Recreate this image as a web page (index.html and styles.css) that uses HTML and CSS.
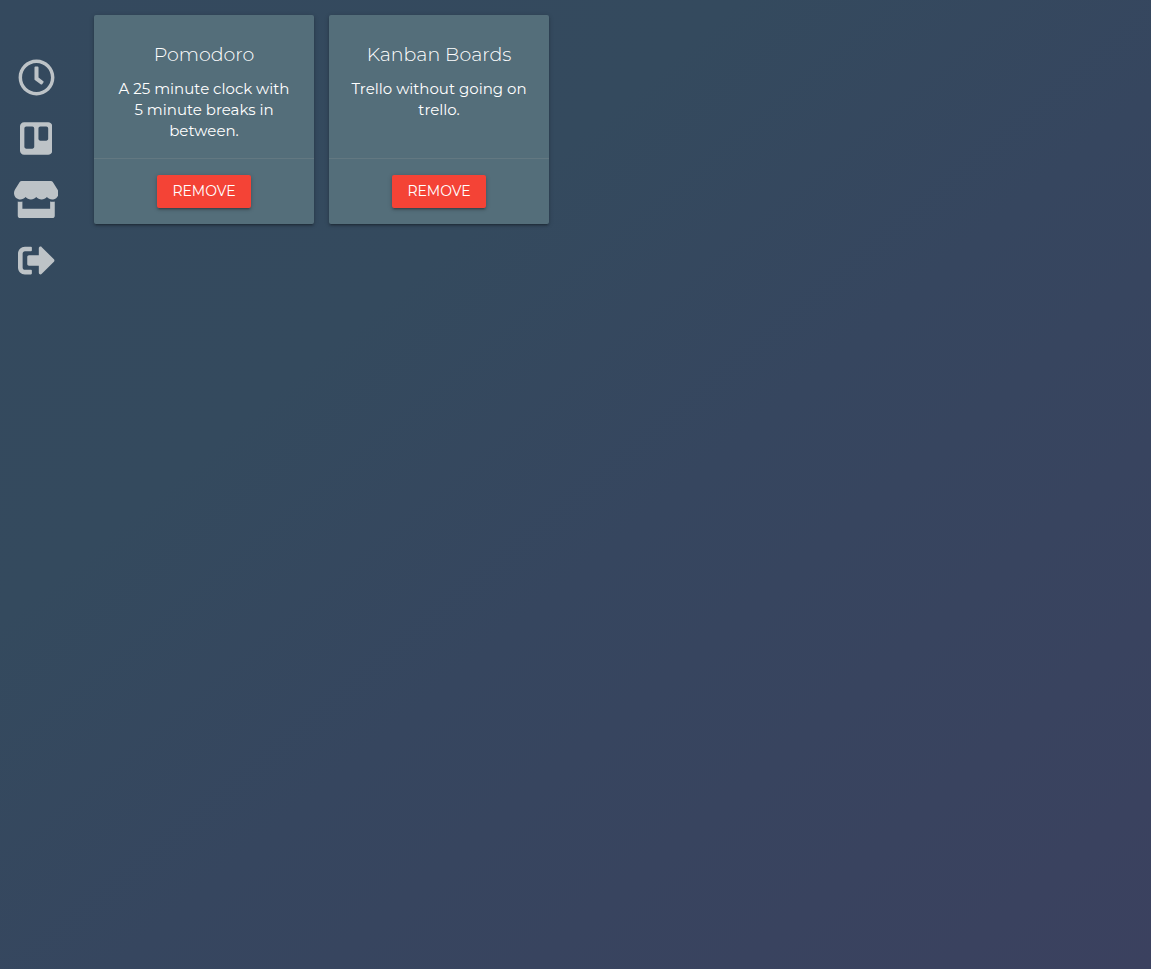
FILE: index.html
```html
<!DOCTYPE html>
<html lang="en">
<head>
  <meta charset="utf-8">
  <meta name="viewport" content="width=device-width, initial-scale=1">
  <title>Store</title>
  <link rel="stylesheet" href="styles.css">
</head>
<body>
  <div class="layout">
    <nav class="sidebar" aria-label="Main">
      <a class="nav-link" href="#pomodoro" aria-label="Pomodoro">
        <svg class="icon" viewBox="0 0 512 512" aria-hidden="true"><path d="M256 8C119 8 8 119 8 256s111 248 248 248 248-111 248-248S393 8 256 8zm0 448c-110.500 0-200-89.500-200-200S145.500 56 256 56s200 89.500 200 200-89.500 200-200 200zm61.800-104.400l-84.900-61.700c-3.100-2.300-4.900-5.900-4.900-9.700V116c0-6.600 5.400-12 12-12h32c6.600 0 12 5.400 12 12v141.700l66.800 48.600c5.400 3.900 6.500 11.400 2.600 16.800L334.600 349c-3.900 5.300-11.400 6.500-16.800 2.600z"/></svg>
      </a>
      <a class="nav-link" href="#boards" aria-label="Kanban boards">
        <svg class="icon" viewBox="0 0 448 512" aria-hidden="true"><path d="M392.300 32H56.100C25.100 32 0 57.100 0 88v336c0 30.900 25.100 56 56 56h336.200c30.800-.2 55.700-25.200 55.700-56V88c.1-30.800-24.800-55.800-55.600-56zM197 371.300c-.2 14.700-12.100 26.600-26.900 26.600H87.400c-14.800.1-26.900-11.800-27-26.600V117.100c0-14.800 12-26.900 26.900-26.900h82.900c14.800 0 26.900 12 26.900 26.900v254.200zm193.100-112c0 14.800-12 26.900-26.900 26.900h-81c-14.800 0-26.900-12-26.900-26.900v-142c0-14.800 12-26.900 26.800-26.900h81.200c14.800 0 26.900 12 26.900 26.900l-.1 142z"/></svg>
      </a>
      <a class="nav-link" href="#store" aria-label="Store">
        <svg class="icon" viewBox="0 0 616 512" aria-hidden="true"><path d="M602 118.600L537.100 15C531.300 5.700 521 0 510 0H106C95 0 84.700 5.700 78.900 15L14 118.600c-33.500 53.500-3.800 127.900 58.800 136.400 4.500.6 9.100.9 13.700.9 29.600 0 55.800-13 73.800-33.100 18 20.100 44.300 33.100 73.800 33.100 29.600 0 55.800-13 73.800-33.100 18 20.100 44.300 33.100 73.800 33.100 29.600 0 55.800-13 73.800-33.100 18.100 20.100 44.300 33.100 73.800 33.100 4.700 0 9.200-.3 13.700-.9 62.800-8.400 92.600-82.800 59-136.400zM529.500 288c-10 0-19.900-1.500-29.500-3.800V384H116v-99.800c-9.600 2.200-19.500 3.800-29.500 3.800-6 0-12.100-.4-18-1.200-5.600-.8-11.100-2.100-16.400-3.600V480c0 17.700 14.300 32 32 32h448c17.700 0 32-14.300 32-32V283.200c-5.400 1.600-10.800 2.900-16.400 3.600-6.100.8-12.100 1.200-18.200 1.200z"/></svg>
      </a>
      <a class="nav-link" href="#logout" aria-label="Log out">
        <svg class="icon" viewBox="0 0 512 512" aria-hidden="true"><path d="M497 273L329 441c-15 15-41 4.500-41-17v-96H152c-13.300 0-24-10.700-24-24v-96c0-13.300 10.700-24 24-24h136V88c0-21.400 25.900-32 41-17l168 168c9.300 9.400 9.300 24.600 0 34zM192 436v-40c0-6.600-5.400-12-12-12H96c-17.700 0-32-14.300-32-32V160c0-17.700 14.300-32 32-32h84c6.600 0 12-5.400 12-12V76c0-6.600-5.400-12-12-12H96c-53 0-96 43-96 96v192c0 53 43 96 96 96h84c6.600 0 12-5.400 12-12z"/></svg>
      </a>
    </nav>

    <main class="cards">
      <article class="card">
        <div class="card-content">
          <h2 class="card-title">Pomodoro</h2>
          <p class="card-text">A 25 minute clock with 5 minute breaks in between.</p>
        </div>
        <div class="card-action">
          <button class="button" type="button">REMOVE</button>
        </div>
      </article>
      <article class="card">
        <div class="card-content">
          <h2 class="card-title">Kanban Boards</h2>
          <p class="card-text">Trello without going on trello.</p>
        </div>
        <div class="card-action">
          <button class="button" type="button">REMOVE</button>
        </div>
      </article>
    </main>
  </div>
</body>
</html>
```

FILE: styles.css
```css
* {
  box-sizing: border-box;
}

body {
  margin: 0;
  min-height: 100vh;
  background: linear-gradient(to bottom right, #34495e 0%, #344a5e 32%, #36465f 55%, #3b415f 100%);
  color: #fff;
  font-family: Montserrat, Inter, "Open Sans", sans-serif;
  font-size: 15px;
}

.layout {
  display: flex;
  align-items: flex-start;
}

.sidebar {
  display: flex;
  flex: none;
  flex-direction: column;
  align-items: center;
  gap: 24px;
  width: 72px;
  padding-top: 59px;
}

.nav-link {
  display: flex;
  color: #bdc3c7;
}

.icon {
  height: 37px;
  fill: currentColor;
}

.cards {
  display: flex;
  flex: 1;
  flex-wrap: wrap;
  gap: 15px;
  padding: 15px 22px;
}

.card {
  display: flex;
  flex-direction: column;
  width: 220px;
  border-radius: 2px;
  background: #546e7a;
  box-shadow: 0 2px 2px rgba(0, 0, 0, 0.14), 0 3px 1px -2px rgba(0, 0, 0, 0.12), 0 1px 5px rgba(0, 0, 0, 0.2);
  text-align: center;
}

.card-content {
  flex: 1;
  padding: 24px 20px 17px;
}

.card-title {
  margin: 0 0 7px;
  font-size: 19px;
  font-weight: 300;
  line-height: 32px;
}

.card-text {
  margin: 0;
  line-height: 21px;
}

.card-action {
  display: flex;
  justify-content: center;
  padding: 16px 24px;
  border-top: 1px solid rgba(160, 160, 160, 0.2);
}

.button {
  padding: 0 15px;
  border: 0;
  border-radius: 2px;
  background: #f44336;
  box-shadow: 0 2px 2px rgba(0, 0, 0, 0.14), 0 3px 1px -2px rgba(0, 0, 0, 0.12), 0 1px 5px rgba(0, 0, 0, 0.2);
  color: #fff;
  font: inherit;
  font-size: 14px;
  line-height: 33px;
  cursor: pointer;
}
```
